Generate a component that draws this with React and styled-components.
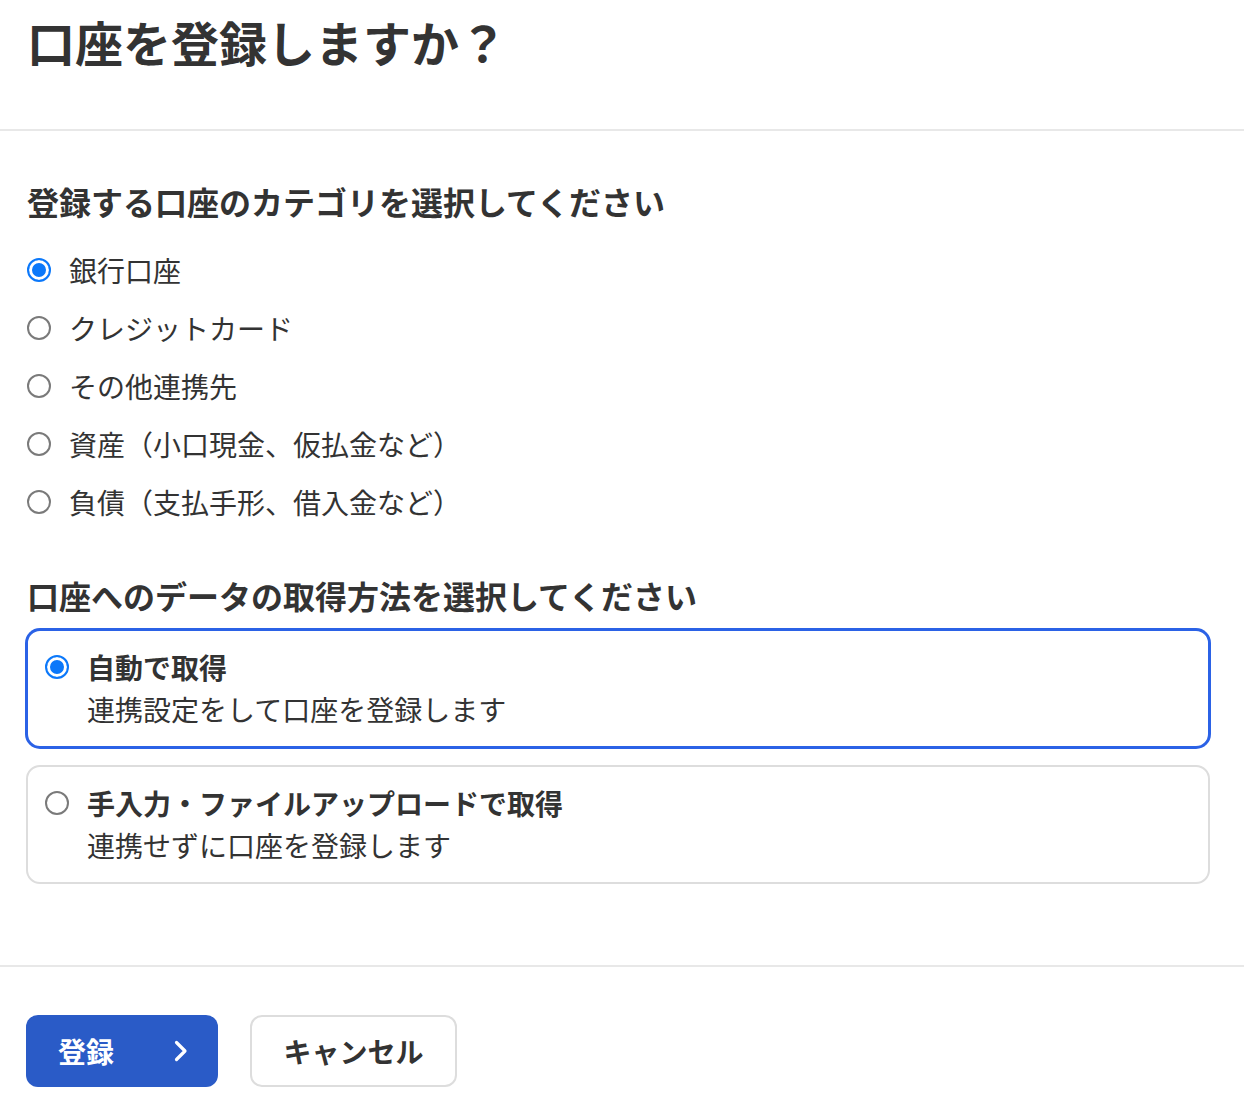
import React, { useState } from 'react';
import styled, { createGlobalStyle, css } from 'styled-components';

const GlobalStyle = createGlobalStyle`
 html, body {
  margin: 0;
  padding: 0;
  background: #fff;
 }
 body {
  font-family: 'Noto Sans CJK JP', 'Noto Sans', sans-serif;
  color: #333;
 }
`;

const categories = [
 '銀行口座',
 'クレジットカード',
 'その他連携先',
 '資産（小口現金、仮払金など）',
 '負債（支払手形、借入金など）',
];

const methods = [
 { title: '自動で取得', desc: '連携設定をして口座を登録します' },
 { title: '手入力・ファイルアップロードで取得', desc: '連携せずに口座を登録します' },
];

export default function App() {
 const [category, setCategory] = useState(0);
 const [method, setMethod] = useState(0);

 return (
  <Page>
   <GlobalStyle />
   <Header>
    <Title>口座を登録しますか？</Title>
   </Header>
   <Body>
    <Section>
     <Heading>登録する口座のカテゴリを選択してください</Heading>
     <RadioList>
      {categories.map((label, i) => (
       <RadioRow key={label} onClick={() => setCategory(i)}>
        <Radio checked={category === i} />
        <RadioLabel>{label}</RadioLabel>
       </RadioRow>
      ))}
     </RadioList>
    </Section>
    <Section>
     <Heading>口座へのデータの取得方法を選択してください</Heading>
     <CardList>
      {methods.map((m, i) => (
       <Card key={m.title} selected={method === i} onClick={() => setMethod(i)}>
        <Radio checked={method === i} />
        <CardText>
         <CardTitle>{m.title}</CardTitle>
         <CardDesc>{m.desc}</CardDesc>
        </CardText>
       </Card>
      ))}
     </CardList>
    </Section>
   </Body>
   <Footer>
    <PrimaryButton>
     登録
     <svg width='14' height='22' viewBox='0 0 14 22'>
      <polyline points='2.5,2.5 11,11 2.5,19.5' fill='none' stroke='#fff' strokeWidth='3.2' strokeLinecap='round' strokeLinejoin='round' />
     </svg>
    </PrimaryButton>
    <SecondaryButton>キャンセル</SecondaryButton>
   </Footer>
  </Page>
 );
}

const Page = styled.div`
 width: 100%;
 min-height: 100vh;
`;

const Header = styled.div`
 padding: 9px 28px 56px 27px;
 border-bottom: 2px solid #e8e8e8;
`;

const Title = styled.h1`
 margin: 0;
 font-size: 48px;
 line-height: 64px;
 font-weight: 700;
 color: #333;
`;

const Body = styled.div`
 padding: 49px 34px 81px 26px;
 border-bottom: 2px solid #e8e8e8;
 display: flex;
 flex-direction: column;
 gap: 43px;
`;

const Section = styled.div`
 display: flex;
 flex-direction: column;
`;

const Heading = styled.h2`
 margin: 0;
 font-size: 32px;
 line-height: 42px;
 font-weight: 700;
 color: #333;
 padding-left: 1px;
`;

const RadioList = styled.div`
 margin-top: 19px;
 display: flex;
 flex-direction: column;
`;

const RadioRow = styled.label`
 display: flex;
 align-items: center;
 gap: 18px;
 height: 58px;
 padding-left: 1px;
 cursor: pointer;
`;

const Radio = styled.span`
 flex: none;
 box-sizing: border-box;
 width: 24px;
 height: 24px;
 border-radius: 50%;
 background: #fff;
 ${(p) =>
  p.checked
   ? css`
      border: 2.5px solid #0b78fa;
      box-shadow: inset 0 0 0 3px #fff, inset 0 0 0 10px #0b78fa;
     `
   : css`
      border: 2px solid #7a7a7a;
     `}
`;

const RadioLabel = styled.span`
 font-size: 28px;
 line-height: 42px;
 color: #333;
`;

const CardList = styled.div`
 margin-top: 13px;
 display: flex;
 flex-direction: column;
 gap: 17px;
`;

const Card = styled.div`
 display: flex;
 align-items: flex-start;
 gap: 18px;
 padding: 15px 16px 16px 17px;
 border-radius: 14px;
 cursor: pointer;
 background: #fff;
 ${(p) =>
  p.selected
   ? css`
      border: 2px solid #2b62e6;
      box-shadow: 0 0 0 1px #2b62e6;
     `
   : css`
      border: 2px solid #dddddd;
     `}
 & > ${Radio} {
  margin-top: 9px;
 }
`;

const CardText = styled.div`
 display: flex;
 flex-direction: column;
`;

const CardTitle = styled.div`
 font-size: 28px;
 line-height: 42px;
 font-weight: 700;
 color: #333;
`;

const CardDesc = styled.div`
 font-size: 28px;
 line-height: 42px;
 color: #333;
`;

const Footer = styled.div`
 display: flex;
 gap: 32px;
 padding: 48px 26px 21px;
`;

const buttonBase = css`
 box-sizing: border-box;
 height: 72px;
 border-radius: 12px;
 font-family: 'Noto Sans CJK JP', 'Noto Sans', sans-serif;
 font-size: 28px;
 font-weight: 700;
 display: flex;
 align-items: center;
 cursor: pointer;
`;

const PrimaryButton = styled.button`
 ${buttonBase}
 width: 192px;
 justify-content: space-between;
 padding: 0 30px 0 32px;
 border: none;
 background: #2a5bc7;
 color: #fff;
`;

const SecondaryButton = styled.button`
 ${buttonBase}
 width: 207px;
 justify-content: center;
 border: 2px solid #dddddd;
 background: #fff;
 color: #333;
`;
